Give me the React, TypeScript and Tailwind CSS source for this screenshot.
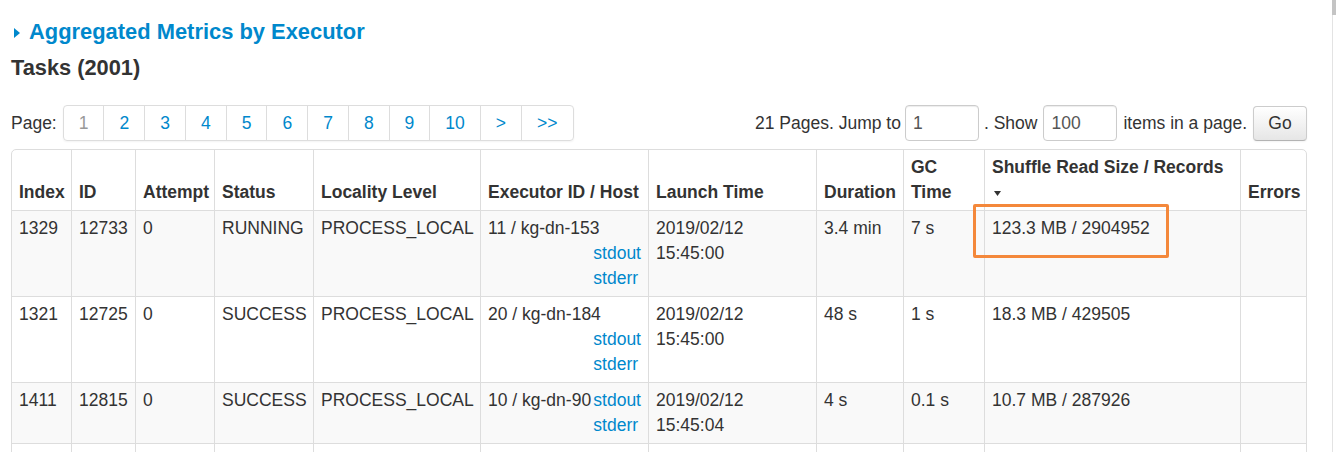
import React from "react";

type Task = {
  index: number;
  id: number;
  attempt: number;
  status: string;
  locality: string;
  host: string;
  date: string;
  time: string;
  duration: string;
  gc: string;
  shuffle: string;
};

const tasks: Task[] = [
  { index: 1329, id: 12733, attempt: 0, status: "RUNNING", locality: "PROCESS_LOCAL", host: "11 / kg-dn-153", date: "2019/02/12", time: "15:45:00", duration: "3.4 min", gc: "7 s", shuffle: "123.3 MB / 2904952" },
  { index: 1321, id: 12725, attempt: 0, status: "SUCCESS", locality: "PROCESS_LOCAL", host: "20 / kg-dn-184", date: "2019/02/12", time: "15:45:00", duration: "48 s", gc: "1 s", shuffle: "18.3 MB / 429505" },
  { index: 1411, id: 12815, attempt: 0, status: "SUCCESS", locality: "PROCESS_LOCAL", host: "10 / kg-dn-90", date: "2019/02/12", time: "15:45:04", duration: "4 s", gc: "0.1 s", shuffle: "10.7 MB / 287926" },
];

const pages = ["1", "2", "3", "4", "5", "6", "7", "8", "9", "10", ">", ">>"];

const th = "border-l border-[#ddd] px-[7px] pt-[5px] pb-[5px] text-left align-bottom font-bold whitespace-nowrap";
const td = "border-l border-t border-[#ddd] px-[7px] py-[5px] text-left align-top";

export default function App() {
  return (
    <div
      className="relative min-h-screen bg-white pl-[11px] pt-[19px] text-[17.5px] leading-[25px] text-[#333]"
      style={{ fontFamily: '"Liberation Sans", Arial, Helvetica, sans-serif' }}
    >
      {/* Collapsible section title */}
      <div className="flex h-[25px] items-center font-bold text-[21.9px] text-[#0088cc]">
        <svg width="6" height="10" viewBox="0 0 6 10" className="ml-[3px] mr-[9px] mt-[2px]">
          <polygon points="0,0 6,5 0,10" fill="#0088cc" />
        </svg>
        <span>Aggregated Metrics by Executor</span>
      </div>

      <h4 className="mt-[11px] h-[25px] font-bold text-[21.8px] leading-[25px]">Tasks (2001)</h4>

      {/* Pagination bar */}
      <div className="mt-[25px] flex w-[1296px] items-center justify-between">
        <div className="flex items-center">
          <span className="mr-[6px]">Page:</span>
          <ul className="flex h-[36px] rounded-[4px] border border-[#ddd] shadow-[0_1px_2px_rgba(0,0,0,0.05)]">
            {pages.map((p, i) => (
              <li
                key={p}
                className={
                  "flex items-center px-[15px] " +
                  (i > 0 ? "border-l border-[#ddd] " : "") +
                  (i === 0 ? "text-[#999]" : "text-[#0088cc]")
                }
              >
                {p}
              </li>
            ))}
          </ul>
        </div>

        <div className="flex items-center">
          <span className="mr-[4px]">21 Pages. Jump to</span>
          <div className="flex h-[36px] w-[74px] items-center rounded-[4px] border border-[#ccc] pl-[7px] text-[#555] shadow-[inset_0_1px_1px_rgba(0,0,0,0.075)]">
            1
          </div>
          <span className="ml-[5px] mr-[6px]">. Show</span>
          <div className="flex h-[36px] w-[74px] items-center rounded-[4px] border border-[#ccc] pl-[7px] text-[#555] shadow-[inset_0_1px_1px_rgba(0,0,0,0.075)]">
            100
          </div>
          <span className="mx-[6px]">items in a page.</span>
          <button className="flex h-[35px] w-[54px] items-center justify-center rounded-[4px] border border-[#ccc] border-b-[#b3b3b3] bg-gradient-to-b from-white to-[#e6e6e6] text-[#333] shadow-[0_1px_2px_rgba(0,0,0,0.05)]">
            Go
          </button>
        </div>
      </div>

      {/* Task table */}
      <table className="mt-[8px] w-[1296px] table-fixed border-separate border-spacing-0 rounded-[5px] border border-[#ddd]">
        <thead>
          <tr>
            <th className={th + " w-[59px] border-l-0"}>Index</th>
            <th className={th + " w-[64px]"}>ID</th>
            <th className={th + " w-[79px]"}>Attempt</th>
            <th className={th + " w-[99px]"}>Status</th>
            <th className={th + " w-[167px]"}>Locality Level</th>
            <th className={th + " w-[168px]"}>Executor ID / Host</th>
            <th className={th + " w-[168px]"}>Launch Time</th>
            <th className={th + " w-[87px]"}>Duration</th>
            <th className={th + " w-[81px]"}>
              GC
              <br />
              Time
            </th>
            <th className={th + " w-[256px]"}>
              Shuffle Read Size / Records
              <br />
              <svg width="7" height="5" viewBox="0 0 7 5" className="ml-[2px] inline-block align-middle">
                <polygon points="0,0 7,0 3.5,5" fill="#333" />
              </svg>
            </th>
            <th className={th + " w-[66px]"}>Errors</th>
          </tr>
        </thead>
        <tbody>
          {tasks.map((t, r) => (
            <tr key={t.id} className={r % 2 === 0 ? "bg-[#f9f9f9]" : "bg-white"}>
              <td className={td + " border-l-0"}>{t.index}</td>
              <td className={td}>{t.id}</td>
              <td className={td}>{t.attempt}</td>
              <td className={td}>{t.status}</td>
              <td className={td}>{t.locality}</td>
              <td className={td}>
                <div className="float-left">{t.host}</div>
                <div className="float-right text-[#0088cc]">
                  stdout
                  <br />
                  stderr
                </div>
              </td>
              <td className={td}>
                {t.date}
                <br />
                {t.time}
              </td>
              <td className={td}>{t.duration}</td>
              <td className={td}>{t.gc}</td>
              <td className={td}>{t.shuffle}</td>
              <td className={td}></td>
            </tr>
          ))}
          {/* next row, only its top edge is in view */}
          <tr className="bg-white">
            <td className={td + " h-[40px] border-l-0"}></td>
            <td className={td}></td>
            <td className={td}></td>
            <td className={td}></td>
            <td className={td}></td>
            <td className={td}></td>
            <td className={td}></td>
            <td className={td}></td>
            <td className={td}></td>
            <td className={td}></td>
            <td className={td}></td>
          </tr>
        </tbody>
      </table>

      {/* Highlight annotation */}
      <div className="absolute left-[973px] top-[204px] h-[54px] w-[196px] rounded-[2px] border-[3px] border-[#f4883b]" />

      {/* Scrollbar edge */}
      <div className="absolute right-[3px] top-0 h-full w-px bg-[#e3e3e3]" />
      <div className="absolute right-0 top-0 h-[15px] w-[4px] bg-[#c4c4c4]" />
    </div>
  );
}
